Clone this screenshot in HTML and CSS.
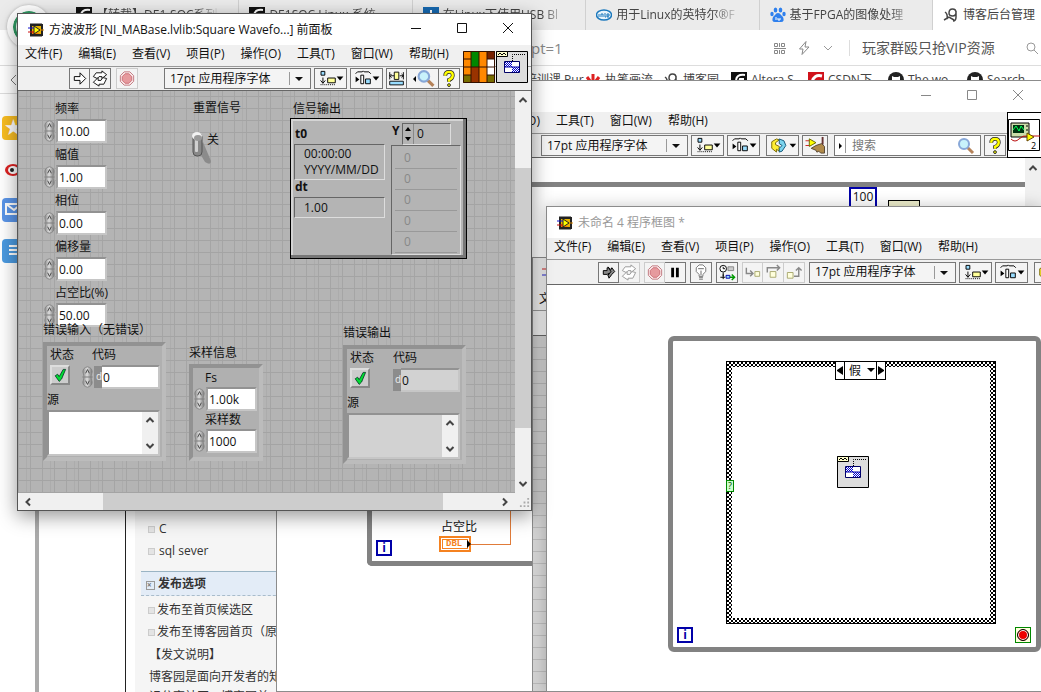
FILE: index.html
```html
<!DOCTYPE html>
<html lang="zh-CN">
<head>
<meta charset="utf-8">
<title>LabVIEW</title>
<link rel="stylesheet" href="styles.css">
</head>
<body>
<svg class="defs" aria-hidden="true">
  <defs>
    <pattern id="dots" width="2" height="2" patternUnits="userSpaceOnUse"><rect width="2" height="2" fill="#fff"/><rect width="1" height="1" fill="#00c"/><rect x="1" y="1" width="1" height="1" fill="#00c"/></pattern>
    <linearGradient id="spin" x2="1"><stop stop-color="#8a8a8a"/><stop offset=".45" stop-color="#ddd"/><stop offset="1" stop-color="#777"/></linearGradient>
    <symbol id="i-vi" viewBox="0 0 16 16"><path d="M3 3h11v10H3z" fill="#e8b400" stroke="#222" stroke-width="2"/><path d="M3 1v2M5 1v2M7 1v2M9 1v2M11 1v2M13 1v2M3 13v2M5 13v2M7 13v2M9 13v2M11 13v2M13 13v2" stroke="#222"/><path d="M4 9l8 3H4z" fill="#f57800"/><path d="M6 4l6 4-6 4z" fill="#ff0" stroke="#222"/><path d="M0 6h6" stroke="#11c"/><path d="M0 10h6" stroke="#c11"/><path d="M12 8h4" stroke="#d80"/></symbol>
    <symbol id="i-run" viewBox="0 0 20 20"><path d="M4 8h6V4l6 6-6 6v-4H4z" fill="#fff" stroke="#000"/></symbol>
    <symbol id="i-broken" viewBox="0 0 20 20"><path d="M4 8h4V5h2l2 2 1-2 3 4-3 3-3 4-1-3 1-2-2 1H4z" fill="#888" stroke="#000"/><path d="M9 4l3 5-3 4" fill="none" stroke="#000"/></symbol>
    <symbol id="i-loop" viewBox="0 0 20 20"><path d="M3 8l3-4h6V2l5 4-5 4V8H9l-2 2z" fill="#fff" stroke="currentColor"/><path d="M17 10l-3 6H9v2l-6-4 5-5v3h3l2-3z" fill="#fff" stroke="currentColor"/></symbol>
    <symbol id="i-stop" viewBox="0 0 20 20"><path d="M7 3h6l4 4v6l-4 4H7l-4-4V7z" fill="#faeaea" stroke="#c07880"/><path d="M8 5h4l3 3v4l-3 3H8l-3-3V8z" fill="#e69a9e" stroke="#cc7078"/></symbol>
    <symbol id="i-align" viewBox="0 0 30 20"><path d="M4.500 2.500h4v4h-4z" fill="#9df" stroke="#000"/><path d="M6.500 9v6M4 12l2.500 3L9 12" fill="none" stroke="#000"/><path d="M11.500 9.500h8v5h-8z" fill="#ff9" stroke="#000"/><path d="M4 16.500h16" stroke="#000" stroke-dasharray="1 1"/><path d="M21 8h7l-3.500 4z" fill="#000"/></symbol>
    <symbol id="i-dist" viewBox="0 0 30 20"><path d="M3 5l2-2h5l1-1 1 1h5l2 2" fill="none" stroke="#000"/><path d="M3 8l4 3-4 3z" fill="#000"/><path d="M8.500 6.500h3v9h-3z" fill="#fff" stroke="#000"/><path d="M13.500 10.500h5v5h-5z" fill="#9df" stroke="#000"/><path d="M21 8h7l-3.500 4z" fill="#000"/></symbol>
    <symbol id="i-resize" viewBox="0 0 22 20"><path d="M3 3v8M18 3v8M4 7h4M14 7h4M5 5L3 7l2 2M16 5l2 2-2 2" fill="none" stroke="#000"/><path d="M8 3h5v8H8z" fill="#ff9" stroke="#000"/><path d="M3 13h15v4H3z" fill="#9df" stroke="#000"/></symbol>
    <symbol id="i-mag" viewBox="0 0 18 18"><path d="M10 10l6 6" stroke="#b5835a" stroke-width="3"/><circle cx="7" cy="7" r="5" fill="#c8f2fb" stroke="#88a8d8" stroke-width="2"/></symbol>
    <symbol id="i-help" viewBox="0 0 14 18"><path d="M3 6q0-4 4-4t4 3.500-4 5v2" fill="none" stroke="#222" stroke-width="4"/><path d="M3 6q0-4 4-4t4 3.500-4 5v2" fill="none" stroke="#ff0" stroke-width="2.500"/><circle cx="7" cy="16" r="1.500" fill="#ff0" stroke="#222"/></symbol>
    <symbol id="i-bulb" viewBox="0 0 20 20"><path d="M8 14v-2L5 9V5l3-3h4l3 3v4l-3 3v2z" fill="#fff" stroke="#777"/><path d="M8 15h4M8 17h4M10 8v5M7 6h6" stroke="#666"/></symbol>
    <symbol id="i-retain" viewBox="0 0 20 20"><circle cx="6" cy="6" r="3.500" fill="#fff" stroke="#000"/><path d="M6 4v2h2M6 10v4M3 15h5M6 12v5" fill="none" stroke="#000"/><path d="M11 4h6v4h-6z" fill="#ccc" stroke="#888"/><path d="M9 13h4v3H9z" fill="#9df" stroke="#00a"/><path d="M13 15h5M15 12l3 3-3 3" fill="none" stroke="#090" stroke-width="1.500"/></symbol>
    <symbol id="i-into" viewBox="0 0 20 20"><path d="M3 5v6h7M7 8l3 3-3 3" fill="none" stroke="#888" stroke-width="1.500"/><path d="M12 9h5v5h-5z" fill="#ffd" stroke="#a9a970"/></symbol>
    <symbol id="i-over" viewBox="0 0 20 20"><path d="M4 10V5h12M14 2l3 3-3 3" fill="none" stroke="#888" stroke-width="1.500"/><path d="M7 9h6v6H7z" fill="#ffd" stroke="#a9a970"/></symbol>
    <symbol id="i-out" viewBox="0 0 20 20"><path d="M3 10h6v6H3z" fill="#ffd" stroke="#a9a970"/><path d="M10 14h5V6M12 8l3-3 3 3" fill="none" stroke="#888" stroke-width="1.500"/></symbol>
    <symbol id="i-order" viewBox="0 0 32 20"><path d="M9 3L4 6v7l5 4v-3l3 2v-5L8 9V7l4-3z" fill="#fe3" stroke="#776600"/><path d="M12 3l5 2 2 5-4 6-3 1v-4l3-3-3-2z" fill="#7cd4ee" stroke="#157"/><path d="M23 8h7l-3.500 4z" fill="#000"/></symbol>
    <symbol id="i-clean" viewBox="0 0 24 20"><path d="M2 5h6M2 10h5" stroke="#c22"/><path d="M6 3l7 4-7 4z" fill="#ff0" stroke="#660"/><path d="M20 1v8" stroke="#633" stroke-width="2"/><path d="M8 13l5-3 6-2 3 3v7h-4l-2-2-2 1-1-2z" fill="#b08a4a" stroke="#543"/></symbol>
    <symbol id="i-subvi" viewBox="0 0 32 32"><path d="M.5.5h31v31H.5z" fill="#ddd" stroke="#000"/><path d="M.5.5h11v5H.5z" fill="#ffc" stroke="#000"/><path d="M2 4l2-2 2 2 2-2 2 2" fill="none" stroke="#000"/><path d="M16.500 10V3.500H30" fill="none" stroke="#000" stroke-dasharray="1 1"/><path d="M8.500 10.500h15v11h-15z" fill="#fff" stroke="#006"/><path d="M9 11h7v5H9zM16 16h7v5h-7z" fill="url(#dots)"/><path d="M8.500 16h15" stroke="#00a"/></symbol>
    <symbol id="i-up" viewBox="0 0 10 10"><path d="M1.500 7L5 3.500 8.500 7" fill="none" stroke="#444" stroke-width="2"/></symbol>
    <symbol id="i-spin" viewBox="0 0 14 24"><path d="M7 1q5 1 5 5.500Q10 11 12 12q-2 1 0 5.500Q12 22 7 23 2 22 2 17.500 4 13 2 12q2-1 0-5.500Q2 2 7 1z" fill="url(#spin)" stroke="#858585"/><path d="M3 12h8" stroke="#777"/><path d="M5 8l2-4 2 4M5 16l2 4 2-4" fill="none" stroke="#444"/></symbol>
    <symbol id="i-check" viewBox="0 0 20 20"><path d="M4 11l3-2 2 3 5-9h3l-5 12-3 3z" fill="#0d3" stroke="#032"/></symbol>
    <symbol id="i-min" viewBox="0 0 12 12"><path d="M1 6.500h10" stroke="currentColor"/></symbol>
    <symbol id="i-max" viewBox="0 0 12 12"><path d="M1.500 1.500h9v9h-9z" fill="none" stroke="currentColor"/></symbol>
    <symbol id="i-close" viewBox="0 0 12 12"><path d="M1 1l10 10M11 1L1 11" stroke="currentColor"/></symbol>
    <symbol id="i-blog" viewBox="0 0 16 16"><path d="M6 6q0-4 3.500-4T13 5.500 9.500 9 6 6M13 4v6q0 4-3 4M2 5q3 2 2 7M1 13l5-3 5 3" fill="none" stroke="#444" stroke-width="1.500"/></symbol>
    <symbol id="i-terasic" viewBox="0 0 16 16"><path d="M0 0h16v16H0z" fill="#111"/><path d="M14 3Q6 2 5 8l-2 5M13 7H9l-2 6" fill="none" stroke="#fff" stroke-width="2"/></symbol>
    <symbol id="i-github" viewBox="0 0 16 16"><circle cx="8" cy="8" r="8" fill="#222"/><path d="M4 4l2 1h4l2-1v4q0 3-4 3T4 8z" fill="#fff"/></symbol>
  </defs>
</svg>

<main class="desktop">
  <section class="browser" aria-label="浏览器">
    <nav class="tabs">
      <a class="tab" href="#"><svg class="ico16"><use href="#i-terasic"/></svg><span>【转载】DE1-SOC系列</span></a>
      <a class="tab" href="#"><svg class="ico16"><use href="#i-terasic"/></svg><span>DE1SOC Linux 系统 -</span></a>
      <a class="tab" href="#"><svg class="ico16" viewBox="0 0 16 16"><path d="M0 0h16v16H0z" fill="#1668b0"/><path d="M8 3v9M4 9l4 4 4-4" stroke="#fff" fill="none" stroke-width="2"/></svg><span>在Linux下使用USB Bl</span></a>
      <a class="tab" href="#"><svg class="ico16" viewBox="0 0 16 16"><ellipse cx="8" cy="8" rx="7.500" ry="5" fill="#e8f4fb" stroke="#1a78bd" stroke-width="1.500"/><path d="M3 7v3M5 10V7h2v3M9 6v4h1M11 9h2V7h-2v3h2" fill="none" stroke="#1a78bd"/></svg><span>用于Linux的英特尔®F</span></a>
      <a class="tab" href="#"><svg class="ico16" viewBox="0 0 16 16" fill="#2f80ed"><ellipse cx="5.500" cy="3" rx="1.800" ry="2.500"/><ellipse cx="10.500" cy="3" rx="1.800" ry="2.500"/><ellipse cx="2" cy="7" rx="1.700" ry="2.200"/><ellipse cx="14" cy="7" rx="1.700" ry="2.200"/><path d="M8 6q2 0 3 2l2 2q2 5-2 5H5q-4 0-2-5l2-2q1-2 3-2"/><path d="M6 10v3M8 11v2h2v-2" stroke="#fff" fill="none"/></svg><span>基于FPGA的图像处理</span></a>
      <a class="tab tab-active" href="#"><svg class="ico16"><use href="#i-blog"/></svg><span>博客后台管理</span></a>
    </nav>
    <div class="address">
      <span class="url">pt=1</span>
      <svg class="ico12" viewBox="0 0 12 12" fill="none" stroke="#888"><path d="M.5 1.500h3v3h-3zM.5 8.500h3v3h-3zM7.500 1.500h3v3h-3zM7.500 8.500h3v3h-3zM5.500 1v4M5.500 8v4M0 6.500h12"/></svg>
      <svg class="ico12 bolt" viewBox="0 0 12 14" fill="none" stroke="#888"><path d="M8 .5L1.500 8H5l-1 5.500L11 6H7z"/></svg>
      <svg class="ico12" viewBox="0 0 12 12" fill="none" stroke="#999"><path d="M2 4l4 4 4-4"/></svg>
      <span class="search-hint">玩家群殴只抢VIP资源</span>
      <svg class="ico12 glass" viewBox="0 0 12 12" fill="none" stroke="#999"><circle cx="5" cy="5" r="4"/><path d="M8 8l4 4"/></svg>
    </div>
    <nav class="bookmarks">
      <a href="#">培训课 Pur</a>
      <a href="#"><svg class="ico16" viewBox="0 0 16 16" stroke="#d22" stroke-width="3" fill="none"><path d="M8 2v13M2 5l3 4M14 5l-3 4M1 11h14"/></svg>执笔画流</a>
      <a href="#"><svg class="ico16"><use href="#i-blog"/></svg>博客园</a>
      <a href="#"><svg class="ico16"><use href="#i-terasic"/></svg>Altera S</a>
      <a href="#"><svg class="ico16" viewBox="0 0 16 16"><path d="M0 0h16v16H0z" fill="#d0121b"/><path d="M14 4q-8-2-10 6" fill="none" stroke="#fff" stroke-width="3"/></svg>CSDN下</a>
      <a href="#"><svg class="ico16"><use href="#i-github"/></svg>The wo</a>
      <a href="#"><svg class="ico16"><use href="#i-github"/></svg>Search</a>
    </nav>
    <div class="avatar"></div>
    <div class="page">
      <aside class="dock">
        <svg class="back" viewBox="0 0 10 14" fill="none" stroke="#777"><path d="M8 2L3 7l5 5"/></svg>
        <span class="dock-item dock-star">★</span>
        <span class="dock-item"><svg viewBox="0 0 20 20"><ellipse cx="9" cy="12" rx="8" ry="6" fill="#d22"/><ellipse cx="9" cy="12" rx="5" ry="4" fill="#fff"/><circle cx="8" cy="12" r="2" fill="#222"/></svg></span>
        <span class="dock-item dock-blue"><svg viewBox="0 0 20 20"><path d="M2 5h15v10H2zM2 5l8 6 7-6" fill="none" stroke="#fff" stroke-width="2"/></svg></span>
        <span class="dock-item dock-blue2"><svg viewBox="0 0 20 20"><path d="M5 6h12M5 10h12M5 14h12" stroke="#fff" stroke-width="2"/></svg></span>
      </aside>
      <div class="page-gutter"></div>
      <div class="page-side">
        <ul class="cats"><li>C</li><li>sql sever</li></ul>
        <h2 class="side-head">发布选项</h2>
        <ul class="opts"><li>发布至首页候选区</li><li>发布至博客园首页（原创）</li></ul>
        <p class="note-title">【发文说明】</p>
        <p class="note">博客园是面向开发者的知识分享社区，博客园首页，即网站首页只能发布原创文章</p>
      </div>
    </div>
  </section>

  <section class="window win-back" aria-label="程序框图">
    <header class="titlebar"><span class="title"></span>
      <div class="caption"><button aria-label="最小化"><svg><use href="#i-min"/></svg></button><button aria-label="最大化"><svg><use href="#i-max"/></svg></button><button aria-label="关闭"><svg><use href="#i-close"/></svg></button></div></header>
    <nav class="menu"><a href="#">文件(F)</a><a href="#">编辑(E)</a><a href="#">查看(V)</a><a href="#">项目(P)</a><a href="#">操作(O)</a><a href="#">工具(T)</a><a href="#">窗口(W)</a><a href="#">帮助(H)</a></nav>
    <div class="toolbar toolbar-diagram">
      <div class="font-box"><select aria-label="字体"><option>17pt 应用程序字体</option></select></div>
      <button class="tb wide" aria-label="对齐"><svg><use href="#i-align"/></svg></button>
      <button class="tb wide" aria-label="分布"><svg><use href="#i-dist"/></svg></button>
      <button class="tb wide after-gap" aria-label="重新排序"><svg><use href="#i-order"/></svg></button>
      <button class="tb mid" aria-label="整理程序框图"><svg><use href="#i-clean"/></svg></button>
      <div class="search-box"><span class="tri"></span><input type="text" placeholder="搜索" aria-label="搜索"><svg class="mag"><use href="#i-mag"/></svg></div>
      <button class="tb" aria-label="帮助"><svg class="q"><use href="#i-help"/></svg></button>
    </div>
    <div class="pane"><svg class="scope" viewBox="0 0 32 32"><path d="M.5.5h31v31H.5z" fill="#fff" stroke="#000"/><path d="M3 4h18v14H3z" fill="#cda" stroke="#000"/><path d="M5 6h11v8H5z" fill="#031"/><path d="M5 11l3-4 3 5 2-5 3 4" fill="none" stroke="#0f5"/><path d="M18 7h2M18 11h2" stroke="#000"/><path d="M3 20q4 4 8 0t8-3h13" fill="none" stroke="#b11"/><path d="M19 14l7 4-7 4z" fill="#ff0" stroke="#640"/><text x="23" y="30" font-size="9">2</text></svg></div>
    <div class="canvas">
      <div class="for-loop"></div>
      <span class="const">100</span>
      <span class="node-stub"></span>
      <span class="iter iter-back">i</span>
      <span class="dbl-label">占空比</span>
      <span class="dbl">DBL</span>
      <span class="wire"></span>
      <span class="vtrack"><svg class="arr"><use href="#i-up"/></svg></span>
    </div>
  </section>

  <section class="window win-sliver" aria-label="前面板">
    <div class="sliver-title"><svg viewBox="0 0 16 16"><path d="M0 5h16" stroke="#c22"/><path d="M0 11h16" stroke="#22c"/><path d="M5 0v16" stroke="#226" stroke-width="2"/></svg></div>
    <div class="sliver-menu">文件(F)</div>
    <div class="sliver-tools"></div>
    <div class="sliver-grid"></div>
  </section>

  <section class="window win-diagram" aria-label="未命名 4 程序框图">
    <header class="titlebar"><svg class="ico16"><use href="#i-vi"/></svg><span class="title">未命名 4 程序框图 *</span></header>
    <nav class="menu"><a href="#">文件(F)</a><a href="#">编辑(E)</a><a href="#">查看(V)</a><a href="#">项目(P)</a><a href="#">操作(O)</a><a href="#">工具(T)</a><a href="#">窗口(W)</a><a href="#">帮助(H)</a></nav>
    <div class="toolbar toolbar-run">
      <div class="group"><button class="tb" aria-label="运行"><svg><use href="#i-broken"/></svg></button><button class="tb off" aria-label="连续运行"><svg><use href="#i-loop"/></svg></button></div>
      <div class="group"><button class="tb off" aria-label="中止"><svg><use href="#i-stop"/></svg></button><button class="tb" aria-label="暂停"><svg viewBox="0 0 20 20"><path d="M6 5h3v10H6zM11 5h3v10h-3z"/></svg></button></div>
      <button class="tb" aria-label="高亮显示"><svg><use href="#i-bulb"/></svg></button>
      <button class="tb" aria-label="保存连线值"><svg><use href="#i-retain"/></svg></button>
      <div class="group"><button class="tb off" aria-label="单步步入"><svg><use href="#i-into"/></svg></button><button class="tb off" aria-label="单步步过"><svg><use href="#i-over"/></svg></button><button class="tb off" aria-label="单步步出"><svg><use href="#i-out"/></svg></button></div>
      <div class="font-tools"><div class="font-box"><select aria-label="字体"><option>17pt 应用程序字体</option></select></div>
      <button class="tb wide" aria-label="对齐"><svg><use href="#i-align"/></svg></button>
      <button class="tb wide" aria-label="分布"><svg><use href="#i-dist"/></svg></button>
      <button class="tb wide after-gap" aria-label="重新排序"><svg><use href="#i-order"/></svg></button></div>
    </div>
    <div class="canvas">
      <div class="while-loop">
        <div class="case"><div class="case-body"></div></div>
        <div class="case-sel"><button class="prev" aria-label="上一个"></button><select aria-label="分支"><option>假</option></select><button class="next" aria-label="下一个"></button></div>
        <svg class="subvi"><use href="#i-subvi"/></svg>
        <span class="case-q">?</span>
        <span class="iter iter-while">i</span>
        <span class="stop-node"><i></i></span>
      </div>
    </div>
  </section>

  <section class="window win-front" aria-label="方波波形 前面板">
    <header class="titlebar"><svg class="ico16"><use href="#i-vi"/></svg><span class="title">方波波形 [NI_MABase.lvlib:Square Wavefo...] 前面板</span>
      <div class="caption"><button aria-label="最小化"><svg><use href="#i-min"/></svg></button><button aria-label="最大化"><svg><use href="#i-max"/></svg></button><button aria-label="关闭"><svg><use href="#i-close"/></svg></button></div></header>
    <nav class="menu"><a href="#">文件(F)</a><a href="#">编辑(E)</a><a href="#">查看(V)</a><a href="#">项目(P)</a><a href="#">操作(O)</a><a href="#">工具(T)</a><a href="#">窗口(W)</a><a href="#">帮助(H)</a></nav>
    <div class="toolbar">
      <div class="group"><button class="tb" aria-label="运行"><svg><use href="#i-run"/></svg></button><button class="tb" aria-label="连续运行"><svg><use href="#i-loop"/></svg></button></div>
      <button class="tb off" aria-label="中止"><svg><use href="#i-stop"/></svg></button>
      <div class="font-tools"><div class="font-box"><select aria-label="字体"><option>17pt 应用程序字体</option></select></div>
      <button class="tb wide" aria-label="对齐"><svg><use href="#i-align"/></svg></button>
      <button class="tb wide" aria-label="分布"><svg><use href="#i-dist"/></svg></button>
      <div class="group"><button class="tb" aria-label="调整大小"><svg><use href="#i-resize"/></svg></button><button class="tb find" aria-label="搜索"><span class="tri-l"></span><svg class="mag"><use href="#i-mag"/></svg></button><button class="tb" aria-label="帮助"><svg class="q"><use href="#i-help"/></svg></button></div></div>
    </div>
    <div class="pane-pair">
      <svg viewBox="0 0 32 32"><path d="M0 0h32v32H0z" fill="#f80"/><path d="M8 0h8v16H8z" fill="#080"/><path d="M8 16h8v15H8z" fill="#930"/><path d="M24 0h8v8h-8z" fill="#720"/><path d="M24 8h8v16h-8z" fill="#fff"/><path d="M0 24h8v8H0zM24 24h8v8h-8z" fill="#786e00"/><path d="M.5.5h31v31H.5zM8 0v32M16 0v32M24 0v32M0 8h8M24 8h8M0 16h32M0 24h8M24 24h8" fill="none" stroke="#310"/></svg>
      <svg><use href="#i-subvi"/></svg>
    </div>
    <div class="work">
      <div class="panel grid-paper">
        <div class="params">
          <div class="num"><label for="freq">频率</label><div class="ctl"><svg><use href="#i-spin"/></svg><input id="freq" value="10.00"></div></div>
          <div class="num"><label for="amp">幅值</label><div class="ctl"><svg><use href="#i-spin"/></svg><input id="amp" value="1.00"></div></div>
          <div class="num"><label for="pha">相位</label><div class="ctl"><svg><use href="#i-spin"/></svg><input id="pha" value="0.00"></div></div>
          <div class="num"><label for="off">偏移量</label><div class="ctl"><svg><use href="#i-spin"/></svg><input id="off" value="0.00"></div></div>
          <div class="num"><label for="dut">占空比(%)</label><div class="ctl"><svg><use href="#i-spin"/></svg><input id="dut" value="50.00"></div></div>
        </div>
        <div class="reset">
          <span>重置信号</span>
          <div class="reset-row"><svg viewBox="0 0 26 38"><path d="M9 20l7 12q6 4 6-1L14 12z" fill="#8b8b8b"/><rect x="4" y="3" width="9" height="23" rx="4" fill="#888" stroke="#555"/><rect x="6" y="9" width="3" height="13" rx="1" fill="#d0d0d0"/><ellipse cx="8" cy="6" rx="5" ry="4" fill="#f2f2f2"/><ellipse cx="9" cy="8" rx="4" ry="3" fill="#999"/></svg><span>关</span></div>
        </div>
        <div class="signal">
          <span>信号输出</span>
          <div class="signal-box">
            <div class="wave">
              <label for="t0">t0</label><textarea id="t0" class="sunk time" readonly>00:00:00
YYYY/MM/DD</textarea>
              <label for="dt">dt</label><input id="dt" class="sunk" value="1.00" readonly>
            </div>
            <div class="ycol">
              <div class="yhead"><label for="yi">Y</label><div class="index"><span class="updown"><b class="inc"></b><b class="dec"></b></span><input id="yi" value="0"></div></div>
              <ol class="ylist"><li>0</li><li>0</li><li>0</li><li>0</li><li>0</li></ol>
            </div>
          </div>
        </div>
        <div class="error err-in">
          <span class="err-title">错误输入（无错误）</span>
          <div class="cluster">
            <div class="err-row">
              <div class="state"><span>状态</span><button class="led" aria-label="状态"><svg><use href="#i-check"/></svg></button></div>
              <div class="code"><label for="ci">代码</label><div class="ctl"><svg><use href="#i-spin"/></svg><span class="radix">d</span><input id="ci" value="0"></div></div>
            </div>
            <label for="si">源</label>
            <div class="src"><textarea id="si"></textarea><span class="mini"><svg><use href="#i-up"/></svg><svg class="down"><use href="#i-up"/></svg></span></div>
          </div>
        </div>
        <div class="sample">
          <span>采样信息</span>
          <div class="cluster">
            <div class="num"><label for="fs">Fs</label><div class="ctl"><svg><use href="#i-spin"/></svg><input id="fs" value="1.00k"></div></div>
            <div class="num"><label for="sn">采样数</label><div class="ctl"><svg><use href="#i-spin"/></svg><input id="sn" value="1000"></div></div>
          </div>
        </div>
        <div class="error err-out">
          <span class="err-title">错误输出</span>
          <div class="cluster">
            <div class="err-row">
              <div class="state"><span>状态</span><button class="led" aria-label="状态"><svg><use href="#i-check"/></svg></button></div>
              <div class="code"><label for="co">代码</label><div class="ctl"><span class="radix">d</span><input id="co" value="0" readonly></div></div>
            </div>
            <label for="so">源</label>
            <div class="src"><textarea id="so" readonly></textarea><span class="mini"><svg><use href="#i-up"/></svg><svg class="down"><use href="#i-up"/></svg></span></div>
          </div>
        </div>
      </div>
      <div class="vbar"><svg class="arr"><use href="#i-up"/></svg><span class="thumb"></span><svg class="arr down"><use href="#i-up"/></svg></div>
      <div class="hbar"><svg class="arr left"><use href="#i-up"/></svg><span class="thumb"></span><svg class="arr right"><use href="#i-up"/></svg></div>
      <div class="grip"><svg viewBox="0 0 12 12" fill="#aaa"><path d="M9 1h2v2H9zM9 5h2v2H9zM5 5h2v2H5zM9 9h2v2H9zM5 9h2v2H5zM1 9h2v2H1z"/></svg></div>
    </div>
  </section>
</main>
</body>
</html>
```

FILE: styles.css
```css
* { box-sizing: border-box; }
body { margin: 0; font: 12px/16px "Open Sans", "Noto Sans CJK SC", sans-serif; color: #111; }
a { color: inherit; text-decoration: none; }
button, input, select, textarea { font: inherit; color: inherit; border-radius: 0; margin: 0; padding: 0; }
ul, ol, p, h2 { margin: 0; padding: 0; list-style: none; }
.defs { position: absolute; width: 0; height: 0; }
.desktop { position: relative; height: 100vh; overflow: hidden; background: #fff; }
.ico16 { width: 16px; height: 16px; flex: none; }
.ico12 { width: 12px; height: 12px; flex: none; }

/* browser */
.browser { height: 100%; display: flex; flex-direction: column; color: #444; }
.tabs { display: grid; grid-template-columns: repeat(5, 1fr) 108px; height: 30px; padding-left: 66px; background: #ebebeb; flex: none; }
.tab { display: flex; align-items: center; gap: 4px; padding-left: 10px; border-right: 1px solid #d0d0d0; white-space: nowrap; overflow: hidden; }
.tab span { width: 124px; overflow: hidden; mask-image: linear-gradient(90deg, #000 80%, transparent); }
.tab-active { background: #fff; border: 0; }
.tab-active span { mask-image: none; }
.address { display: flex; align-items: center; height: 36px; padding: 0 3px 0 531px; border-bottom: 1px solid #ddd; flex: none; gap: 12px; }
.url { flex: 1; font-size: 15px; color: #888; }
.bolt { height: 14px; }
.search-hint { font-size: 14px; color: #555; border-left: 1px solid #ddd; margin-left: 3px; padding-left: 12px; width: 177px; white-space: nowrap; }
.glass { margin-left: -12px; }
.bookmarks { display: grid; grid-template-columns: 60px 78px 68px 77px 80px 79px 1fr; padding-left: 525px; height: 28px; border-bottom: 1px solid #ddd; flex: none; overflow: hidden; }
.bookmarks a { display: flex; align-items: center; gap: 4px; white-space: nowrap; overflow: hidden; }
.avatar { position: absolute; left: 7px; top: 5px; width: 44px; height: 44px; border-radius: 50%; background: #fff; border: 6px solid #fff; box-shadow: inset 0 0 0 3px #2f9a63, 0 0 3px #aaa; }
.page { flex: 1; display: flex; min-height: 0; }
.dock { position: relative; width: 35px; display: flex; flex-direction: column; gap: 17px; padding: 22px 0 0 2px; flex: none; }
.back { position: absolute; left: 8px; top: -21px; width: 10px; height: 14px; }
.dock-item { width: 23px; height: 24px; border-radius: 4px; color: #fff; font-size: 18px; line-height: 22px; text-align: center; }
.dock-item svg { width: 20px; height: 22px; }
.dock-star { background: #f8bd22; }
.dock-blue { background: #5a95e8; }
.dock-blue2 { background: #4b9ae0; }
.page-gutter { width: 91px; border-left: 4px solid #aaa; border-right: 1px solid #222; flex: none; }
.page-side { width: 151px; margin-left: 9px; padding: 424px 0 0 6px; background: #f5f5f5; overflow: hidden; flex: none; color: #333; white-space: nowrap; }
.cats { padding: 0 0 9px 7px; }
.cats li { line-height: 22px; }
.cats li::before, .opts li::before { content: ""; display: inline-block; width: 5px; height: 5px; margin-right: 4px; border: 1px solid #ccc; background: #e4e4e4; }
.side-head { background: #e3ecf7; border-top: 1px solid #9ab4c4; border-bottom: 1px dashed #a9bccb; font-size: 12px; line-height: 23px; padding-left: 5px; }
.side-head::before { content: "×"; display: inline-block; width: 7px; height: 7px; border: 1px solid #999; color: #777; font-size: 8px; line-height: 5px; margin-right: 3px; }
.opts { padding: 3px 0 0 7px; }
.opts li { line-height: 22px; }
.opts li::before { margin-right: 2px; }
.note-title { padding-left: 8px; line-height: 24px; }
.note { padding-left: 8px; line-height: 20px; white-space: normal; width: 142px; }

/* windows */
.window { position: absolute; display: flex; flex-direction: column; background: #fff; border: 1px solid #8c8c8c; }
.win-back { left: 276px; top: 80px; right: 0; bottom: 0; border-right: 0; }
.win-sliver { left: 532px; top: 257px; width: 20px; bottom: 0; background: #f0f0f0; overflow: hidden; }
.win-diagram { left: 546px; top: 206px; right: 0; bottom: 0; border-right: 0; box-shadow: 0 0 14px rgba(0,0,0,.22); overflow: hidden; }
.win-front { left: 17px; top: 13px; width: 515px; height: 498px; border-color: #555; box-shadow: 0 5px 18px rgba(0,0,0,.42); }
.titlebar { display: flex; align-items: center; height: 31px; padding-left: 10px; gap: 5px; flex: none; }
.win-diagram .titlebar { color: #999; }
.title { flex: 1; white-space: nowrap; }
.caption { display: flex; align-self: flex-start; }
.caption button { width: 46px; height: 28px; border: 0; background: none; }
.caption svg { width: 12px; height: 12px; display: block; margin: auto; }
.win-back .caption { color: #888; }
.menu { display: flex; gap: 16px; height: 21px; padding: 0 7px; line-height: 18px; background: #f0f0f0; white-space: nowrap; flex: none; }
.toolbar { display: flex; align-items: center; height: 26px; gap: 5px; padding-left: 51px; background: #f0f0f0; border-top: 1px solid #999; border-bottom: 1px solid #666; flex: none; }
.toolbar-run { gap: 4px; }
.win-front .toolbar, .win-back .toolbar { height: 25px; }
.group { display: flex; }
.group .tb + .tb { border-left-width: 0; }
.tb { display: flex; align-items: center; justify-content: center; width: 22px; height: 21px; border: 1px solid #777; background: #f4f4f4; flex: none; }
.tb svg { width: 20px; height: 19px; flex: none; }
.group .tb { width: 21px; }
.off { border-color: #ccc; color: #999; }
.tb.wide { width: 33px; }
.tb.wide svg { width: 30px; }
.tb.mid { width: 26px; }
.tb.mid svg { width: 24px; }
.tb svg.q { width: 14px; height: 17px; }
.group .tb.find { width: 32px; }
.mag { width: 18px; height: 18px; flex: none; }
.tri-l { border: 3px solid transparent; border-right-color: #000; }
.font-tools { display: flex; gap: 3px; margin-left: 21px; }
.toolbar-run .font-tools { margin-left: 0; }
.toolbar-diagram { padding-left: 264px; gap: 3px; }
.after-gap { margin-left: 3px; }
.font-box { position: relative; width: 147px; height: 21px; flex: none; }
.font-box select { appearance: none; width: 100%; height: 100%; border: 1px solid #777; background: #f4f4f4; padding-left: 5px; }
.font-box::before { content: ""; position: absolute; right: 21px; top: 4px; height: 13px; border-left: 1px solid #999; pointer-events: none; }
.font-box::after { content: ""; position: absolute; right: 8px; top: 9px; border: 4px solid transparent; border-top-color: #111; border-bottom: 0; pointer-events: none; }
.search-box { display: flex; align-items: center; width: 147px; height: 21px; margin-left: 3px; padding-right: 5px; border: 1px solid #777; background: #fff; flex: none; }
.search-box input { flex: 1; min-width: 0; height: 15px; border: 0; border-left: 1px solid #999; padding-left: 6px; background: none; }
.search-box input::placeholder { color: #777; opacity: 1; }
.tri { border: 3px solid transparent; border-left-color: #000; margin: 0 0 0 4px; }
.pane { position: absolute; right: 0; top: 31px; width: 34px; height: 46px; border: 1px solid #000; border-right: 0; background: #fff; padding-top: 6px; }
.scope { width: 32px; height: 32px; display: block; }
.pane-pair { position: absolute; right: 3px; top: 37px; display: flex; gap: 1px; }
.pane-pair svg { width: 32px; height: 32px; display: block; }
.canvas { position: relative; flex: 1; background: #fff; overflow: hidden; }

/* back diagram */
.for-loop { position: absolute; left: 90px; top: 24px; right: 16px; height: 384px; border: 5px solid #828282; border-radius: 5px 0 0 5px; border-right: 0; }
.const { position: absolute; left: 572px; top: 29px; width: 28px; height: 21px; border: 2px solid #0000a8; background: #fff; text-align: center; }
.node-stub { position: absolute; left: 611px; top: 42px; width: 32px; height: 20px; border: 1px solid #000; background: #eec; }
.iter { position: absolute; width: 16px; height: 16px; border: 2px solid #0000a8; color: #0000a8; font-weight: bold; line-height: 12px; text-align: center; }
.iter-back { left: 99px; top: 382px; }
.iter-while { left: 4px; bottom: 4px; }
.dbl-label { position: absolute; left: 164px; top: 361px; }
.dbl { position: absolute; left: 162px; top: 378px; width: 32px; height: 16px; border: 2px solid #f58220; background: #fff; box-shadow: inset 0 0 0 1px #fff, inset 0 0 0 2px #f58220; color: #f58220; font: bold 9px/12px "Liberation Mono", monospace; padding-left: 5px; }
.dbl::after { content: ""; position: absolute; right: -2px; top: 2px; border: 4px solid transparent; border-left-color: #000; border-right: 0; }
.wire { position: absolute; left: 194px; top: 340px; width: 40px; height: 47px; border: 1px solid #e07b39; border-width: 0 1px 1px 0; }
.vtrack { position: absolute; right: 0; top: 0; bottom: 0; width: 16px; background: #f0f0f0; padding: 5px 3px; }
.arr { width: 10px; height: 10px; flex: none; display: block; }
.down { transform: rotate(180deg); }
.left { transform: rotate(-90deg); }
.right { transform: rotate(90deg); }

/* sliver */
.sliver-title { height: 31px; padding: 6px 0 0 9px; }
.sliver-title svg { width: 16px; height: 16px; }
.sliver-menu { height: 22px; padding-left: 6px; line-height: 20px; border-bottom: 1px solid #999; white-space: nowrap; }
.sliver-tools { height: 25px; border-bottom: 1px solid #666; }
.sliver-grid { flex: 1; background: repeating-linear-gradient(#d2d2d2 0 11px, #b8b8b8 11px 12px); }

.grid-paper {
  background-color: #b4b4b4;
  background-image:
    repeating-linear-gradient(0deg, #a4a4a4 0 1px, transparent 1px 12px),
    repeating-linear-gradient(90deg, #a5a5a5 0 1px, transparent 1px 12px),
    repeating-linear-gradient(90deg, transparent 0 8px, #acacac 8px 9px, transparent 9px 24px);
}

/* diagram canvas */
.while-loop { position: absolute; left: 121px; top: 51px; right: 0; height: 316px; border: 5px solid #828282; border-radius: 6px; }
.case { position: absolute; left: 53px; top: 20px; width: 270px; height: 263px; padding: 5px; border: 1px solid #000; background: repeating-conic-gradient(#000 0 25%, #fff 0 50%) 0 0 / 4px 4px; }
.case-body { height: 100%; background: #fff; }
.case-sel { position: absolute; left: 162px; top: 20px; width: 51px; height: 19px; display: flex; border: 1px solid #000; background: #fff; }
.case-sel button { width: 8px; padding: 4px 1px; border: 0; background: #fff; display: flex; }
.case-sel button::before { content: ""; border: 4px solid transparent; }
.case-sel .prev::before { border-right: 6px solid #000; border-left: 0; }
.case-sel .next::before { border-left: 6px solid #000; border-right: 0; }
.case-sel select { appearance: none; flex: 1; min-width: 0; border: 1px solid #000; border-width: 0 1px; padding-left: 4px; background: #fff; }
.case-sel::after { content: ""; position: absolute; right: 10px; top: 6px; border: 4px solid transparent; border-top-color: #000; border-bottom: 0; pointer-events: none; }
.subvi { position: absolute; left: 164px; top: 115px; width: 32px; height: 32px; }
.case-q { position: absolute; left: 53px; top: 139px; width: 8px; height: 12px; border: 1px solid #080; background: #cfc; color: #040; font-size: 9px; line-height: 10px; text-align: center; }
.stop-node { position: absolute; right: 5px; bottom: 4px; width: 16px; height: 16px; border: 1px solid #080; background: #ffd; padding: 1px; }
.stop-node i { display: block; width: 12px; height: 12px; border-radius: 50%; background: #e00; border: 1px solid #000; box-shadow: inset 0 0 0 1px #fff; }

/* front panel */
.work { flex: 1; display: grid; grid-template: 1fr 17px / 1fr 16px; min-height: 0; }
.panel { position: relative; overflow: hidden; }
.vbar, .hbar { display: flex; align-items: center; background: #f0f0f0; }
.vbar { flex-direction: column; padding: 4px 0; }
.hbar { padding: 0 5px; }
.vbar .thumb { width: 100%; height: 260px; margin: 63px 0 auto; background: #cdcdcd; }
.hbar .thumb { width: 340px; height: 100%; margin: 0 auto 0 70px; background: #cdcdcd; }
.grip { background: #f0f0f0; padding: 4px 0 0 4px; }
.grip svg { width: 11px; height: 11px; display: block; }
.params { position: absolute; left: 25px; top: 10px; }
.num { display: flex; flex-direction: column; height: 46px; gap: 2px; }
.num label { padding-left: 12px; white-space: nowrap; }
.ctl { display: flex; align-items: center; }
.ctl svg { width: 13px; height: 24px; flex: none; }
.ctl input { width: 51px; height: 24px; border: 2px solid; border-color: #929292 #c6c6c6 #c6c6c6 #a0a0a0; background: #fff; padding-left: 1px; }
.reset { position: absolute; left: 175px; top: 9px; }
.reset-row { display: flex; margin: 14px 0 0 -4px; line-height: 20px; }
.reset-row svg { width: 26px; height: 38px; margin-right: -8px; }
.signal { position: absolute; left: 272px; top: 9px; width: 177px; }
.signal > span { padding-left: 3px; display: block; line-height: 18px; }
.signal-box { display: flex; justify-content: space-between; height: 141px; padding: 3px 3px 1px 3px; border: 1px solid #000; background: #b4b4b4; box-shadow: inset -3px -3px 0 #777, inset 2px 2px 0 #d4d4d4; }
.wave { width: 91px; display: flex; flex-direction: column; }
.wave label, .yhead label { font-weight: bold; }
.wave label { line-height: 14px; padding: 5px 0 3px 1px; }
.wave textarea + label { padding: 0 0 3px 1px; }
.sunk { display: block; width: 91px; height: 21px; border: 1px solid; border-color: #666 #ddd #ddd #666; background: transparent; padding-left: 9px; resize: none; overflow: hidden; }
.sunk.time { height: 36px; padding-top: 1px; white-space: pre; }
.ycol { width: 70px; margin-right: 2px; }
.yhead { display: flex; gap: 2px; height: 23px; padding-top: 1px; }
.yhead label { width: 9px; padding-left: 1px; }
.index { display: flex; align-items: center; width: 49px; height: 22px; border: 1px solid; border-color: #666 #ddd #ddd #666; }
.updown { width: 11px; height: 100%; display: flex; flex-direction: column; align-items: center; justify-content: center; gap: 6px; border-right: 1px solid #888; }
.updown b { border: 3px solid transparent; }
.inc { border-top: 0 !important; border-bottom: 4px solid #000 !important; }
.dec { border-bottom: 0 !important; border-top: 4px solid #000 !important; }
.index input { width: 35px; border: 0; background: none; padding-left: 3px; }
.ylist { border: 1px solid; border-color: #666 #ddd #ddd #666; height: 110px; padding: 2px 3px 1px; color: #888; }
.ylist li { height: 21px; line-height: 20px; border-bottom: 1px solid #999; padding-left: 9px; }
.cluster { border: 4px solid; border-color: #929292 #bcbcbc #bcbcbc #929292; background: #b0b0b0; }
.error { position: absolute; width: 123px; }
.err-in { left: 25px; top: 231px; }
.err-out { left: 325px; top: 234px; }
.err-title { display: block; line-height: 16px; height: 20px; white-space: nowrap; }
.error .cluster { height: 119px; padding: 1px 2px 2px 0; }
.err-row { display: flex; line-height: 15px; height: 43px; }
.state { width: 34px; padding-left: 3px; white-space: nowrap; }
.led { display: flex; width: 20px; height: 20px; margin-top: 3px; border: 2px solid; border-color: #ddd #888 #888 #ddd; background: #ccc; }
.led svg { width: 16px; height: 16px; }
.code { flex: 1; }
.code label { padding-left: 11px; }
.code .ctl { margin-top: 3px; }
.err-out .code label { padding-left: 12px; }
.err-out .code .ctl { padding-left: 12px; }
.radix { width: 8px; height: 22px; background: #8c8c8c; color: #eee; text-align: right; line-height: 20px; font-size: 10px; flex: none; }
.code .ctl input { flex: 1; min-width: 0; border-left: 0; }
.error .cluster > label { display: block; line-height: 20px; }
.src { display: flex; height: 46px; border: 2px solid; border-color: #929292 #c6c6c6 #c6c6c6 #929292; background: #fff; }
.src textarea { flex: 1; min-width: 0; border: 0; background: none; resize: none; }
.mini { width: 16px; background: #f0f0f0; display: flex; flex-direction: column; justify-content: space-between; align-items: center; padding: 3px 0; }
.mini svg { width: 10px; height: 10px; }
.err-out .src, .err-out .code .ctl input { background: #d2d2d2; }
.sample { position: absolute; left: 171px; top: 254px; width: 74px; }
.sample .cluster { margin-top: 3px; height: 97px; padding: 2px 0 0; }
.sample .num { height: 42px; gap: 1px; }
```
